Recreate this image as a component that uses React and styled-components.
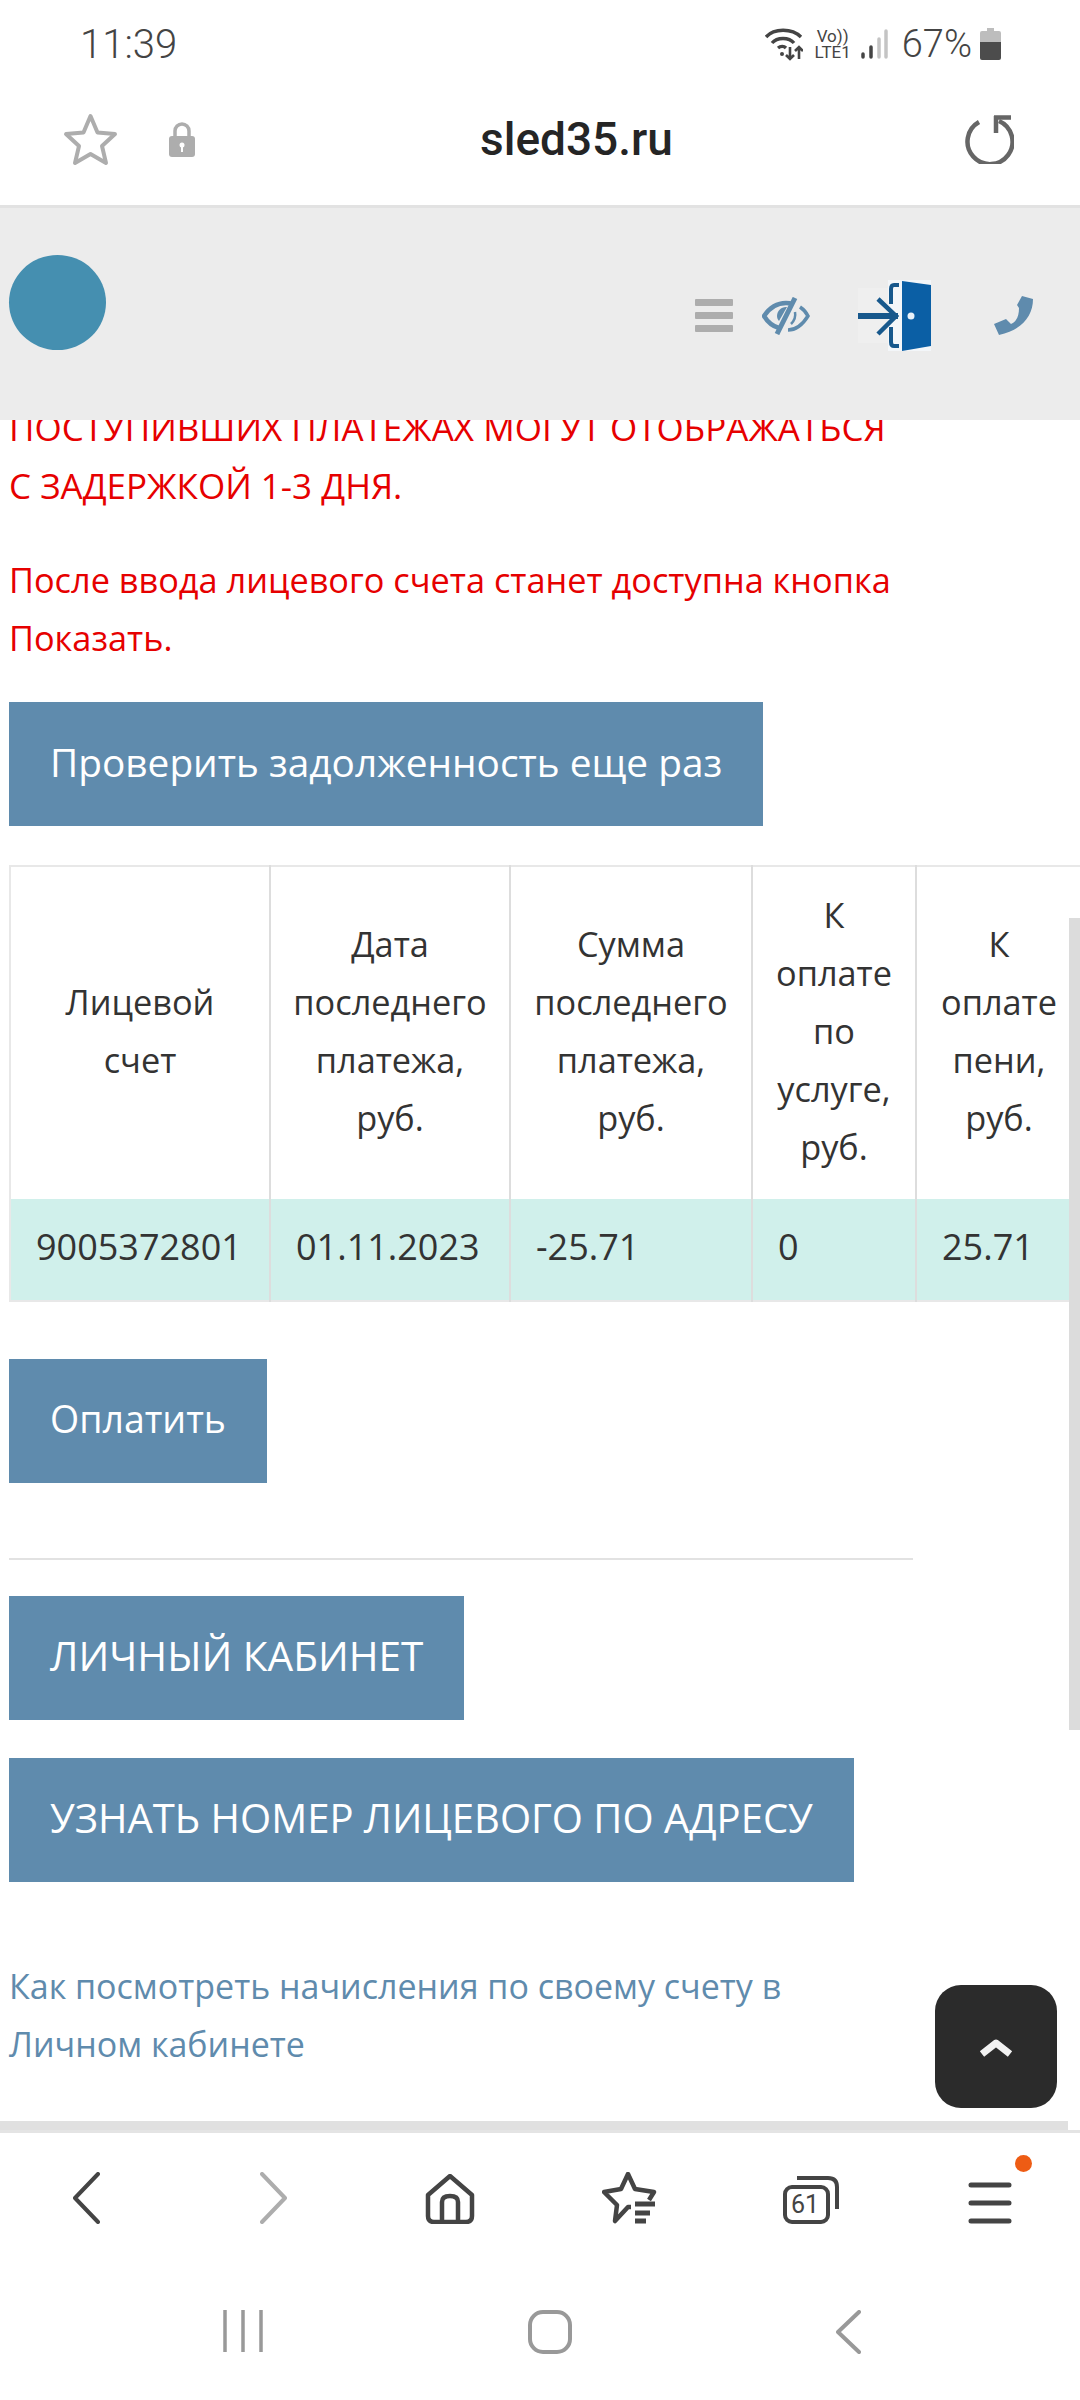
import styled, { createGlobalStyle } from "styled-components";

const GlobalStyle = createGlobalStyle`
  html, body {
    margin: 0;
    padding: 0;
    background: #fff;
  }
  * {
    box-sizing: border-box;
  }
`;

const PAGE_FONT = `"Open Sans", "Noto Sans", sans-serif`;
const UI_FONT = `Roboto, "Noto Sans", sans-serif`;

const Screen = styled.div`
  position: relative;
  width: 1080px;
  height: 2400px;
  display: flex;
  flex-direction: column;
  overflow: hidden;
  background: #fff;
`;

const StatusBar = styled.div`
  height: 68px;
  flex: none;
  display: flex;
  align-items: center;
  padding: 20px 79px 0 80px;
  justify-content: space-between;
  font-family: ${UI_FONT};
  font-weight: 300;
  font-size: 40px;
  color: #444;
`;

const StatusIcons = styled.div`
  display: flex;
  align-items: center;
`;

const Percent = styled.span`
  font-size: 38px;
  margin: 0 8px 0 14px;
`;

const NetLabel = styled.div`
  display: flex;
  flex-direction: column;
  align-items: center;
  font-size: 17px;
  line-height: 16px;
  font-weight: 400;
  margin: 0 10px 0 12px;
`;

const UrlBar = styled.div`
  height: 140px;
  flex: none;
  display: flex;
  align-items: center;
  padding: 5px 66px 0 63px;
  border-bottom: 3px solid #e2e2e2;
`;

const UrlLeft = styled.div`
  width: 300px;
  display: flex;
  align-items: center;
  gap: 51px;
`;

const UrlText = styled.div`
  flex: 1;
  padding-left: 117px;
  font-family: ${UI_FONT};
  font-size: 46px;
  font-weight: 500;
  color: #252525;
`;

const SiteHeader = styled.div`
  height: 212px;
  flex: none;
  display: flex;
  align-items: flex-start;
  justify-content: space-between;
  padding: 47px 47px 0 9px;
  background: #ececec;
`;

const Avatar = styled.div`
  width: 97px;
  height: 95px;
  border-radius: 50%;
  background: #458fb0;
`;

const HeaderIcons = styled.div`
  display: flex;
  align-items: center;
  margin-top: 25px;
`;

const HeaderIcon = styled.div`
  margin-left: ${(props) => props.$gap || 0}px;
`;

const Burger = styled.div`
  width: 38px;
  display: flex;
  flex-direction: column;
  gap: 6px;
`;

const BurgerBar = styled.span`
  height: 7px;
  border-radius: 1px;
  background: #adadad;
`;

const Main = styled.main`
  height: 1701px;
  flex: none;
  overflow: hidden;
  padding-left: 9px;
  font-family: ${PAGE_FONT};
  font-size: 34.3px;
  line-height: 58px;
  color: #333;
`;

const Column = styled.div`
  width: 904px;
`;

const Notice = styled.p`
  margin: ${(props) => props.$top || 0}px 0 0;
  font-size: ${(props) => props.$size || 34.3}px;
  color: #e60000;
`;

const ActionButton = styled.div`
  display: inline-block;
  height: 124px;
  line-height: 120px;
  padding: 0 41px;
  background: #5f8bad;
  color: #fff;
  font-size: ${(props) => props.$size || 38.8}px;
  white-space: nowrap;
`;

const ButtonRow = styled.div`
  height: 124px;
  margin-top: ${(props) => props.$top}px;
`;

const Table = styled.table`
  width: 1071px;
  margin-top: 39px;
  table-layout: fixed;
  border-collapse: collapse;
  border-top: 2px solid #e8e8e8;
  border-left: 2px solid #e8e8e8;
  border-bottom: 2px solid #e8e8e8;
`;

const HeadCell = styled.th`
  height: 333px;
  padding: 0 16px 5px;
  font-weight: 400;
  text-align: center;
  vertical-align: middle;
  border-right: 2px solid #ddd;
  &:last-child {
    border-right: none;
  }
`;

const DataRow = styled.tr`
  background: #d0f0eb;
`;

const DataCell = styled.td`
  height: 102px;
  padding: 0 25px 5px;
  font-size: 36px;
  border-right: 2px solid #ddd;
  white-space: nowrap;
  &:last-child {
    border-right: none;
  }
`;

const Divider = styled.hr`
  margin: 75px 0 0;
  border: none;
  border-top: 2px solid #e2e2e2;
`;

const HelpLink = styled.p`
  margin: 75px 0 0;
  font-size: 34px;
  color: #5f8bad;
`;

const PageEdge = styled.div`
  height: 12px;
  flex: none;
  border-bottom: 3px solid #e4e4e4;
  background: linear-gradient(to right, #e0e0e0 1068px, #fff 1068px);
`;

const ScrollThumb = styled.div`
  position: absolute;
  top: 918px;
  right: 0;
  width: 11px;
  height: 812px;
  background: #dcdcdc;
`;

const ToTop = styled.div`
  position: absolute;
  left: 935px;
  top: 1985px;
  width: 122px;
  height: 123px;
  border-radius: 26px;
  background: #2b2b2b;
  display: flex;
  align-items: center;
  justify-content: center;
`;

const BrowserNav = styled.nav`
  position: relative;
  height: 131px;
  flex: none;
  display: grid;
  grid-template-columns: 187px 165px 177px 181px 185px 44px;
  align-items: end;
  padding: 0 0 40px 73px;
`;

const Badge = styled.span`
  position: absolute;
  left: 1015px;
  top: 22px;
  width: 17px;
  height: 17px;
  border-radius: 50%;
  background: #ee5c14;
`;

const SystemNav = styled.div`
  flex: 1;
  display: flex;
  align-items: flex-start;
  justify-content: space-between;
  padding: 46px 219px 0 223px;
`;

const NavIcon = styled.svg`
  display: block;
  flex: none;
`;

const WifiIcon = () => (
  <NavIcon width="38" height="34" viewBox="0 0 38 34" fill="none" stroke="#444" strokeWidth="3.4">
    <path d="M1 10C9 1 27 1 36 10" />
    <path d="M7 16C12 10 24 10 29 16" />
    <path d="M13 21C15.500 19 19 19 21 21" />
    <circle cx="17" cy="27" r="2" fill="#444" stroke="none" />
    <path d="M25 20V32M21 28l4 4 4-4" strokeWidth="2.600" />
    <path d="M34 32V20M30 24l4-4 4 4" strokeWidth="2.600" />
  </NavIcon>
);

const SignalIcon = () => (
  <NavIcon width="27" height="30" viewBox="0 0 27 30" strokeLinecap="round" strokeWidth="3.500" fill="none">
    <path d="M2 28V25" stroke="#444" />
    <path d="M10 28V18" stroke="#444" />
    <path d="M18 28V10" stroke="#c4c4c4" />
    <path d="M25 28V2" stroke="#c4c4c4" />
  </NavIcon>
);

const BatteryIcon = () => (
  <NavIcon width="21" height="32" viewBox="0 0 21 32">
    <path d="M7 0H14V3H19Q21 3 21 5V14H0V5Q0 3 2 3H7Z" fill="#bdbdbd" />
    <path d="M0 14H21V30Q21 32 19 32H2Q0 32 0 30Z" fill="#4c4c4c" />
  </NavIcon>
);

const BookmarkStar = () => (
  <NavIcon width="55" height="53" viewBox="0 0 55 53" fill="none" stroke="#adadad" strokeWidth="4" strokeLinejoin="round">
    <path d="M27.500 3L34.500 19.500L52 21L39 33L43 50L27.500 41L12 50L16 33L3 21L20.500 19.500Z" />
  </NavIcon>
);

const LockIcon = () => (
  <NavIcon width="26" height="35" viewBox="0 0 26 35">
    <path d="M6 15V9A7 7 0 0 1 20 9V15" fill="none" stroke="#adadad" strokeWidth="3.500" />
    <rect x="0" y="14" width="26" height="21" rx="3" fill="#adadad" />
    <circle cx="13" cy="23" r="2.500" fill="#fff" />
    <rect x="12" y="24" width="2" height="6" fill="#fff" />
  </NavIcon>
);

const ReloadIcon = () => (
  <NavIcon width="50" height="50" viewBox="0 0 50 50" fill="none" stroke="#666" strokeWidth="4.500">
    <path d="M15 8A22.500 22.500 0 1 0 35 7" />
    <path d="M32 2V19M30 3.500H47" stroke="#666" />
  </NavIcon>
);

const EyeOffIcon = () => (
  <NavIcon width="48" height="38" viewBox="0 0 48 38" fill="none" stroke="#5f8bad" strokeWidth="4.500">
    <path d="M17 31C10 29 5 24 2 19C8 10 16 6 24 6C26 6 28 6 30 7" />
    <path d="M26 33C34 33 41 27 46 19C44 15 41 12 38 10" strokeWidth="3.500" />
    <path d="M33 1L15 37" strokeWidth="5" />
    <path d="M24 10C19 10 15 14 15 19C15 21 16 23 17 24L25 10Z" fill="#5f8bad" stroke="none" />
    <path d="M33 15C34 20 32 24 29 27" strokeWidth="2.500" />
  </NavIcon>
);

const DoorIcon = () => (
  <NavIcon width="73" height="71" viewBox="0 0 73 71" fill="none">
    <rect x="0" y="8" width="42" height="55" fill="#efefef" />
    <rect x="30" width="43" height="71" fill="#f3f6f9" />
    <path d="M44 1L73 5V66L44 71Z" fill="#0b5fa5" />
    <circle cx="53" cy="36" r="3.500" fill="#e8f2fa" />
    <path d="M0 36H40" stroke="#17588c" strokeWidth="6" />
    <path d="M20 19L38 36L20 54" stroke="#17588c" strokeWidth="4.500" />
    <path d="M41 5H36Q33 5 33 9V24M41 66H36Q33 66 33 62V47" stroke="#17588c" strokeWidth="4" />
  </NavIcon>
);

const PhoneIcon = () => (
  <NavIcon width="39" height="39" viewBox="0 0 39 39">
    <path d="M28 0L39 3C39 20 28 34 5 39L0 28L12 23L17 28C22 26 25 21 25 12L23 9Z" fill="#5f8bad" />
  </NavIcon>
);

const ChevronUp = () => (
  <NavIcon width="36" height="24" viewBox="0 0 36 24" fill="none" stroke="#f2f2f2" strokeWidth="7" strokeLinejoin="round">
    <path d="M4 19L18 8L32 19" />
  </NavIcon>
);

const BackIcon = ({ color = "#444", width = 27, height = 52, thin = 4 }) => (
  <NavIcon width={width} height={height} viewBox={`0 0 ${width} ${height}`} fill="none" stroke={color} strokeWidth={thin} strokeLinecap="round" strokeLinejoin="round">
    <path d={`M${width - 2} 2L2 ${height / 2}L${width - 2} ${height - 2}`} />
  </NavIcon>
);

const ForwardIcon = () => (
  <NavIcon width="27" height="52" viewBox="0 0 27 52" fill="none" stroke="#adadad" strokeWidth="4" strokeLinecap="round" strokeLinejoin="round">
    <path d="M2 2L25 26L2 50" />
  </NavIcon>
);

const HomeIcon = () => (
  <NavIcon width="50" height="50" viewBox="0 0 50 50" fill="none" stroke="#444" strokeWidth="4.500" strokeLinejoin="round">
    <path d="M25 2L47 21V42Q47 48 41 48H9Q3 48 3 42V21Z" />
    <path d="M17 47V28Q17 22 25 22Q33 22 33 28V47" />
  </NavIcon>
);

const BookmarksIcon = () => (
  <NavIcon width="55" height="52" viewBox="0 0 55 52" fill="none" stroke="#444" strokeWidth="4.500" strokeLinejoin="round">
    <path d="M29 35H26L13 49L15 33L2 20L19 17L26 2L33 17L52 20L47 28" />
    <path d="M33 32H53M33 41H48M33 49H44" strokeWidth="5" />
  </NavIcon>
);

const TabsCount = styled.span`
  position: absolute;
  left: 5px;
  top: 14px;
  width: 34px;
  text-align: center;
  font-family: ${UI_FONT};
  font-size: 25px;
  line-height: 30px;
  font-weight: 400;
  color: #444;
`;

const TabsBox = styled.div`
  position: relative;
  width: 56px;
  height: 48px;
`;

const TabsIcon = () => (
  <TabsBox>
    <NavIcon width="56" height="48" viewBox="0 0 56 48" fill="none" stroke="#444" strokeWidth="4">
      <rect x="2" y="11" width="43" height="35" rx="7" />
      <path d="M14 2H45Q54 2 54 11V33" />
    </NavIcon>
    <TabsCount>61</TabsCount>
  </TabsBox>
);

const MenuIcon = () => (
  <NavIcon width="44" height="42" viewBox="0 0 44 42" fill="none" stroke="#444" strokeWidth="5" strokeLinecap="round">
    <path d="M3 3H41M3 21H41M3 39H41" />
  </NavIcon>
);

const RecentsIcon = () => (
  <NavIcon width="40" height="42" viewBox="0 0 40 42" fill="none" stroke="#999" strokeWidth="3.500">
    <path d="M2 0V42M20 0V42M38 0V42" />
  </NavIcon>
);

const HomeKeyIcon = () => (
  <NavIcon width="44" height="44" viewBox="0 0 44 44" fill="none" stroke="#999" strokeWidth="4">
    <rect x="2" y="2" width="40" height="40" rx="13" />
  </NavIcon>
);

const headers = [
  "Лицевой счет",
  "Дата последнего платежа, руб.",
  "Сумма последнего платежа, руб.",
  "К оплате по услуге, руб.",
  "К оплате пени, руб.",
];

const row = ["9005372801", "01.11.2023", "-25.71", "0", "25.71"];

const columnWidths = [260, 240, 242, 164, 165];

const App = () => {
  return (
    <Screen>
      <GlobalStyle />
      <StatusBar>
        <span>11:39</span>
        <StatusIcons>
          <WifiIcon />
          <NetLabel>
            <span>Vo))</span>
            <span>LTE1</span>
          </NetLabel>
          <SignalIcon />
          <Percent>67%</Percent>
          <BatteryIcon />
        </StatusIcons>
      </StatusBar>
      <UrlBar>
        <UrlLeft>
          <BookmarkStar />
          <LockIcon />
        </UrlLeft>
        <UrlText>sled35.ru</UrlText>
        <ReloadIcon />
      </UrlBar>
      <SiteHeader>
        <Avatar />
        <HeaderIcons>
          <Burger>
            <BurgerBar />
            <BurgerBar />
            <BurgerBar />
          </Burger>
          <HeaderIcon $gap={29}>
            <EyeOffIcon />
          </HeaderIcon>
          <HeaderIcon $gap={48}>
            <DoorIcon />
          </HeaderIcon>
          <HeaderIcon $gap={63}>
            <PhoneIcon />
          </HeaderIcon>
        </HeaderIcons>
      </SiteHeader>
      <Main>
        <Column>
          <Notice $top={-21} $size={35}>
            ПОСТУПИВШИХ ПЛАТЕЖАХ МОГУТ ОТОБРАЖАТЬСЯ
            <br />С ЗАДЕРЖКОЙ 1-3 ДНЯ.
          </Notice>
          <Notice $top={36}>
            После ввода лицевого счета станет доступна кнопка Показать.
          </Notice>
          <ButtonRow $top={35}>
            <ActionButton>Проверить задолженность еще раз</ActionButton>
          </ButtonRow>
          <Table>
            <colgroup>
              {columnWidths.map((width, index) => (
                <col key={index} width={width} />
              ))}
            </colgroup>
            <thead>
              <tr>
                {headers.map((text) => (
                  <HeadCell key={text}>{text}</HeadCell>
                ))}
              </tr>
            </thead>
            <tbody>
              <DataRow>
                {row.map((text) => (
                  <DataCell key={text}>{text}</DataCell>
                ))}
              </DataRow>
            </tbody>
          </Table>
          <ButtonRow $top={57}>
            <ActionButton $size={37.500}>Оплатить</ActionButton>
          </ButtonRow>
          <Divider />
          <ButtonRow $top={36}>
            <ActionButton $size={40.500}>ЛИЧНЫЙ КАБИНЕТ</ActionButton>
          </ButtonRow>
          <ButtonRow $top={38}>
            <ActionButton $size={40}>УЗНАТЬ НОМЕР ЛИЦЕВОГО ПО АДРЕСУ</ActionButton>
          </ButtonRow>
          <HelpLink>Как посмотреть начисления по своему счету в Личном кабинете</HelpLink>
        </Column>
      </Main>
      <PageEdge />
      <BrowserNav>
        <BackIcon />
        <ForwardIcon />
        <HomeIcon />
        <BookmarksIcon />
        <TabsIcon />
        <MenuIcon />
        <Badge />
      </BrowserNav>
      <SystemNav>
        <RecentsIcon />
        <HomeKeyIcon />
        <BackIcon color="#999" width={25} height={44} />
      </SystemNav>
      <ScrollThumb />
      <ToTop>
        <ChevronUp />
      </ToTop>
    </Screen>
  );
};

export default App;
